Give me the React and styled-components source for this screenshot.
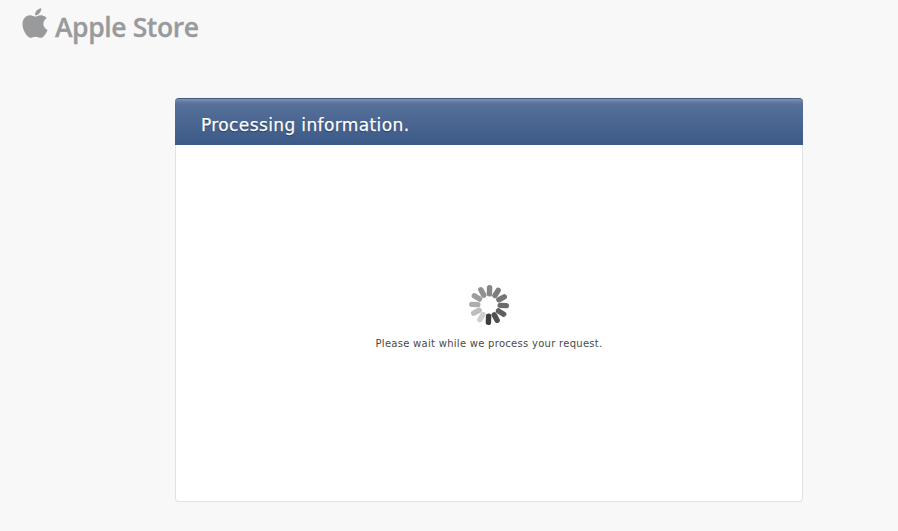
import React from 'react'
import styled, { createGlobalStyle } from 'styled-components'
import { FaApple } from 'react-icons/fa'

const GlobalStyle = createGlobalStyle`
  html, body {
    margin: 0;
    padding: 0;
    background: #f8f8f8;
  }
`

const Page = styled.div`
  width: 898px;
  height: 531px;
  overflow: hidden;
  box-sizing: border-box;
  padding: 8px 0 0 22px;
`

const Brand = styled.div`
  display: flex;
  align-items: center;
  height: 34px;
  gap: 6px;
  color: #999a9c;
`

const BrandIcon = styled(FaApple)`
  width: 28px;
  height: 34px;
  margin: -5px 0 0 -1px;
`

const BrandName = styled.span`
  font-family: 'Open Sans', sans-serif;
  font-weight: 600;
  font-size: 26.5px;
  letter-spacing: -0.4px;
  margin-top: 4px;
  -webkit-text-stroke: 0.3px #999a9c;
`

const Panel = styled.main`
  width: 628px;
  height: 404px;
  margin: 56px 0 0 153px;
  box-sizing: border-box;
  background: #fff;
  border: 1px solid #e2e2e2;
  border-top: 0;
  border-radius: 4px;
  display: flex;
  flex-direction: column;
`

const PanelHeader = styled.header`
  height: 47px;
  margin: 0 -1px;
  box-sizing: border-box;
  padding: 5px 0 0 26px;
  display: flex;
  align-items: center;
  border-radius: 4px 4px 0 0;
  border-top: 1px solid #3e5a85;
  background: linear-gradient(#8094b2 0, #64799f 3px, #566f98 6px, #3b5a88 100%);
`

const PanelTitle = styled.h1`
  margin: 0;
  font-family: 'DejaVu Sans', sans-serif;
  font-weight: 400;
  font-size: 17px;
  letter-spacing: 0.38px;
  color: #fff;
  -webkit-text-stroke: 0.25px #fff;
  text-shadow: 0 1px 1px rgba(20, 35, 60, 0.8);
`

const PanelBody = styled.div`
  flex: 1;
  display: flex;
  flex-direction: column;
  align-items: center;
  padding-top: 139px;
`

const Spoke = styled.rect`
  fill: ${(p) => p.$shade};
`

const Message = styled.p`
  margin: 11px 0 0;
  font-family: 'DejaVu Sans', sans-serif;
  font-size: 10px;
  line-height: 14px;
  letter-spacing: 0.28px;
  color: #4a4a4a;
`

// lightest at 7 o'clock, getting darker clockwise round to 6 o'clock
const shades = ['#cfcfcf', '#bdbdbd', '#adadad', '#9c9c9c', '#909090', '#878787', '#7d7d7d', '#757575', '#6c6c6c', '#606060', '#505050', '#3e3e3e']

const Spinner = () => (
  <svg width="42" height="42" viewBox="-21 -21 42 42">
    {shades.map((shade, i) => (
      <Spoke
        key={i}
        $shade={shade}
        x="-2.7"
        y="-20"
        width="5.4"
        height="11.5"
        rx="2.7"
        transform={`rotate(${212 + i * 30})`}
      />
    ))}
  </svg>
)

export default function App() {
  return (
    <>
      <GlobalStyle />
      <Page>
        <Brand>
          <BrandIcon />
          <BrandName>Apple Store</BrandName>
        </Brand>
        <Panel>
          <PanelHeader>
            <PanelTitle>Processing information.</PanelTitle>
          </PanelHeader>
          <PanelBody>
            <Spinner />
            <Message>Please wait while we process your request.</Message>
          </PanelBody>
        </Panel>
      </Page>
    </>
  )
}
